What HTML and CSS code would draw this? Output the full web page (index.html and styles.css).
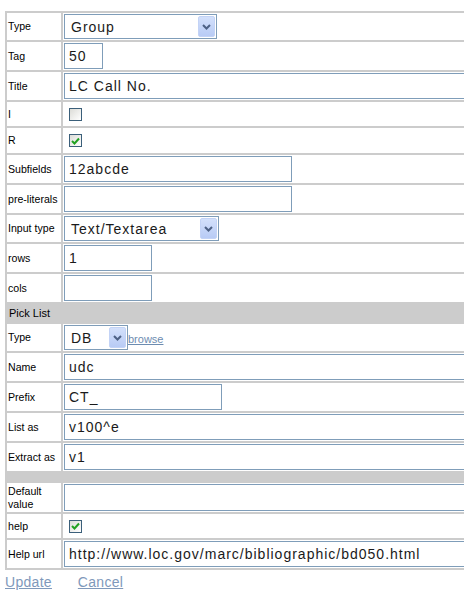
FILE: index.html
```html
<!DOCTYPE html>
<html>
<head>
<meta charset="utf-8">
<link rel="stylesheet" href="styles.css">
</head>
<body>
<table class="form">
  <tr class="r-sel">
    <td class="lbl">Type</td>
    <td class="val"><div class="sel w152"><span class="sel-text">Group</span><span class="sel-btn"><svg width="9" height="6" viewBox="0 0 9 6"><path d="M1 1 L4.5 4.5 L8 1" fill="none" stroke="#4d6185" stroke-width="2"/></svg></span></div></td>
  </tr>
  <tr class="r-inp">
    <td class="lbl">Tag</td>
    <td class="val"><input class="txt w38" type="text" value="50"></td>
  </tr>
  <tr class="r-inp">
    <td class="lbl">Title</td>
    <td class="val"><input class="txt wlong" type="text" value="LC Call No."></td>
  </tr>
  <tr class="r-chk">
    <td class="lbl">I</td>
    <td class="val"><span class="chk"></span></td>
  </tr>
  <tr class="r-chk2">
    <td class="lbl">R</td>
    <td class="val"><span class="chk"><svg width="9" height="8" viewBox="0 0 9 8"><path d="M1 4 L3.5 6.5 L8 1.5" fill="none" stroke="#21a121" stroke-width="2"/></svg></span></td>
  </tr>
  <tr class="r-inp">
    <td class="lbl">Subfields</td>
    <td class="val"><input class="txt w227" type="text" value="12abcde"></td>
  </tr>
  <tr class="r-inp">
    <td class="lbl">pre-literals</td>
    <td class="val"><input class="txt w227" type="text" value=""></td>
  </tr>
  <tr class="r-sel">
    <td class="lbl">Input type</td>
    <td class="val"><div class="sel w154"><span class="sel-text">Text/Textarea</span><span class="sel-btn"><svg width="9" height="6" viewBox="0 0 9 6"><path d="M1 1 L4.5 4.5 L8 1" fill="none" stroke="#4d6185" stroke-width="2"/></svg></span></div></td>
  </tr>
  <tr class="r-inp">
    <td class="lbl">rows</td>
    <td class="val"><input class="txt w87" type="text" value="1"></td>
  </tr>
  <tr class="r-inp">
    <td class="lbl">cols</td>
    <td class="val"><input class="txt w87" type="text" value=""></td>
  </tr>
  <tr class="r-head">
    <td class="head" colspan="2">Pick List</td>
  </tr>
  <tr class="r-sel">
    <td class="lbl">Type</td>
    <td class="val"><div class="inline"><div class="sel w63"><span class="sel-text">DB</span><span class="sel-btn"><svg width="9" height="6" viewBox="0 0 9 6"><path d="M1 1 L4.5 4.5 L8 1" fill="none" stroke="#4d6185" stroke-width="2"/></svg></span></div><a class="browse" href="#">browse</a></div></td>
  </tr>
  <tr class="r-inp">
    <td class="lbl">Name</td>
    <td class="val"><input class="txt wlong" type="text" value="udc"></td>
  </tr>
  <tr class="r-inp">
    <td class="lbl">Prefix</td>
    <td class="val"><input class="txt w157" type="text" value="CT_"></td>
  </tr>
  <tr class="r-inp">
    <td class="lbl">List as</td>
    <td class="val"><input class="txt wlong" type="text" value="v100^e"></td>
  </tr>
  <tr class="r-inp">
    <td class="lbl">Extract as</td>
    <td class="val"><input class="txt wlong" type="text" value="v1"></td>
  </tr>
  <tr class="r-gap">
    <td class="gap" colspan="2"></td>
  </tr>
  <tr class="r-def">
    <td class="lbl">Default value</td>
    <td class="val"><input class="txt wlong tall" type="text" value=""></td>
  </tr>
  <tr class="r-chk">
    <td class="lbl">help</td>
    <td class="val"><span class="chk"><svg width="9" height="8" viewBox="0 0 9 8"><path d="M1 4 L3.5 6.5 L8 1.5" fill="none" stroke="#21a121" stroke-width="2"/></svg></span></td>
  </tr>
  <tr class="r-inp">
    <td class="lbl">Help url</td>
    <td class="val"><input class="txt wlong" type="text" value="http://www.loc.gov/marc/bibliographic/bd050.html"></td>
  </tr>
</table>
<div class="actions">
  <a class="act" href="#">Update</a>
  <a class="act" href="#">Cancel</a>
</div>
</body>
</html>
```
FILE: styles.css
```css
html, body {
  background: #ffffff;
}
body {
  margin: 11px 0 0 5px;
  font-family: "Liberation Sans", Arial, sans-serif;
  font-size: 11px;
  color: #000;
  width: 600px;
}
.form {
  border-collapse: separate;
  border-spacing: 2px;
  background: #cccccc;
  width: 560px;
}
.form td {
  background: #ffffff;
  padding: 1px;
  vertical-align: middle;
}
.form td.lbl {
  width: 53px;
  font-size: 10.6px;
  line-height: 13px;
  padding-left: 1px;
  padding-right: 0;
}
.form td.head {
  background: #cccccc;
  height: 16px;
  padding-left: 2px;
}
.form td.gap {
  background: #cccccc;
  height: 6px;
}
.r-sel td { height: 25px; }
.r-inp td { height: 26px; }
.r-chk td { height: 22px; }
.r-chk2 td { height: 23px; }
.r-def td { height: 27px; }

.txt {
  display: block;
  box-sizing: border-box;
  height: 26px;
  margin: 0;
  border: 1px solid #7f9db9;
  padding: 0 4px;
  font-family: "Liberation Sans", Arial, sans-serif;
  font-size: 14px;
  letter-spacing: 1px;
  color: #1a1a1a;
  background: #fff;
  outline: none;
}
.txt.tall { height: 27px; }
.w38 { width: 39px; }
.w87 { width: 88px; }
.w157 { width: 158px; }
.w227 { width: 228px; }
.wlong { width: 440px; }

.sel {
  box-sizing: border-box;
  height: 25px;
  border: 1px solid #7f9db9;
  display: flex;
  align-items: center;
  justify-content: space-between;
  background: #fff;
  padding: 1px;
}
.w152 { width: 153px; }
.w154 { width: 155px; }
.w63 { width: 64px; }
.sel-text {
  font-size: 14px;
  letter-spacing: 1px;
  padding-left: 5px;
  color: #1a1a1a;
}
.sel-btn {
  box-sizing: border-box;
  width: 17px;
  height: 21px;
  background: linear-gradient(#d3e0fb, #b8cbf5);
  border: 1px solid #c3d3f6;
  border-radius: 2px;
  display: flex;
  align-items: center;
  justify-content: center;
}
.inline {
  display: flex;
  align-items: center;
}
.browse {
  color: #6d8cb0;
  font-size: 11px;
  text-decoration: underline;
  margin-top: 3px;
}
.chk {
  box-sizing: border-box;
  display: flex;
  align-items: center;
  justify-content: center;
  width: 13px;
  height: 13px;
  margin-left: 5px;
  border: 1px solid #3b5f7a;
  background: linear-gradient(135deg, #dcdcd7, #ffffff);
}
.actions {
  padding-top: 3px;
  line-height: 18px;
  font-size: 14px;
}
.act {
  color: #7f99bb;
  text-decoration: underline;
  letter-spacing: 0.3px;
  margin-right: 22px;
}
```
